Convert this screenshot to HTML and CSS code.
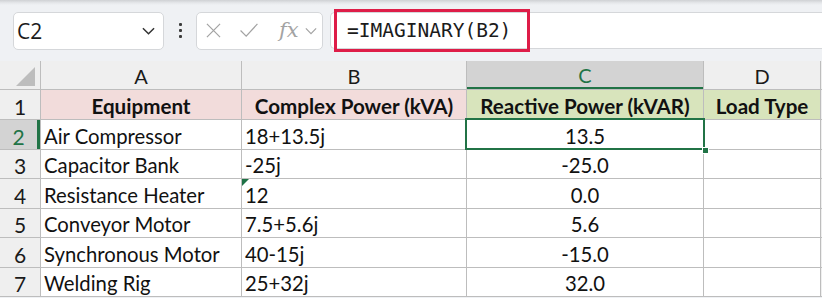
FILE: index.html
```html
<!DOCTYPE html>
<html lang="en">

<head>
  <meta charset="UTF-8" />
  <meta name="viewport" content="width=device-width, initial-scale=1.0" />
  <title>IMAGINARY</title>
  <link rel="stylesheet" href="styles.css">
</head>

<body>
  <div class="toolbar">
    <div class="name-box">
      <span class="name-text">C2</span>
      <svg class="chevron" viewBox="0 0 14 8" fill="none" stroke="currentColor">
        <path stroke-width="1.6" d="M1 1l6 6 6-6"></path>
      </svg>
    </div>
    <div class="grip"><i></i><i></i><i></i></div>
    <div class="fx-box">
      <svg class="fx-icon" viewBox="0 0 16 16" fill="none" stroke="currentColor">
        <path stroke-width="1.3" d="M1 1l14 14M15 1L1 15"></path>
      </svg>
      <svg class="fx-icon fx-check" viewBox="0 0 20 16" fill="none" stroke="currentColor">
        <path stroke-width="1.3" d="M1 8l6 6L19 1"></path>
      </svg>
      <span class="fx-label">fx</span>
      <svg class="chevron small" viewBox="0 0 14 8" fill="none" stroke="currentColor">
        <path stroke-width="1.4" d="M1 1l6 6 6-6"></path>
      </svg>
    </div>
    <div class="formula-bar">
      <span class="formula">=IMAGINARY(B2)</span>
    </div>
    <div class="highlight"></div>
  </div>

  <div class="sheet">
    <div class="grid">
      <div class="corner"><span class="corner-mark"></span></div>
      <div class="col-hdr">A</div>
      <div class="col-hdr">B</div>
      <div class="col-hdr active">C</div>
      <div class="col-hdr">D</div>
      <div class="pad"></div>

      <div class="row-hdr">1</div>
      <div class="cell head pink">Equipment</div>
      <div class="cell head pink">Complex Power (kVA)</div>
      <div class="cell head green">Reactive Power (kVAR)</div>
      <div class="cell head green">Load Type</div>
      <div class="pad"></div>

      <div class="row-hdr active">2</div>
      <div class="cell">Air Compressor</div>
      <div class="cell">18+13.5j</div>
      <div class="cell num">13.5</div>
      <div class="cell"></div>
      <div class="pad"></div>

      <div class="row-hdr">3</div>
      <div class="cell">Capacitor Bank</div>
      <div class="cell">-25j</div>
      <div class="cell num">-25.0</div>
      <div class="cell"></div>
      <div class="pad"></div>

      <div class="row-hdr">4</div>
      <div class="cell">Resistance Heater</div>
      <div class="cell flagged">12</div>
      <div class="cell num">0.0</div>
      <div class="cell"></div>
      <div class="pad"></div>

      <div class="row-hdr">5</div>
      <div class="cell">Conveyor Motor</div>
      <div class="cell">7.5+5.6j</div>
      <div class="cell num">5.6</div>
      <div class="cell"></div>
      <div class="pad"></div>

      <div class="row-hdr">6</div>
      <div class="cell">Synchronous Motor</div>
      <div class="cell">40-15j</div>
      <div class="cell num">-15.0</div>
      <div class="cell"></div>
      <div class="pad"></div>

      <div class="row-hdr">7</div>
      <div class="cell">Welding Rig</div>
      <div class="cell">25+32j</div>
      <div class="cell num">32.0</div>
      <div class="cell"></div>
      <div class="pad"></div>
    </div>
    <div class="selection"><span class="handle"></span></div>
  </div>
</body>

</html>
```

FILE: styles.css
```css
:root {
  --toolbar-bg: #eff1f4;
  --box-border: #d5d7da;
  --icon: #a3a3a3;
  --grid-line: #bdbdbd;
  --hdr-bg: #efefef;
  --hdr-active: #d3d3d3;
  --excel-green: #217346;
  --pink: #f2dcdb;
  --green: #d8e4bc;
  --red: #de1d48;
}

* {
  box-sizing: border-box;
  margin: 0;
  padding: 0;
}

body {
  width: 822px;
  height: 298px;
  overflow: hidden;
  background: var(--toolbar-bg);
  font-family: Lato, "Liberation Sans", sans-serif;
  color: #000;
}

/* barre de formule */
.toolbar {
  position: relative;
  height: 61px;
  display: flex;
  align-items: center;
  padding: 0 0 0 13px;
  background: linear-gradient(#cfd1d4 0, #e6e8eb 3px, var(--toolbar-bg) 5px);
}

.name-box {
  display: flex;
  align-items: center;
  justify-content: space-between;
  width: 151px;
  height: 38px;
  padding: 0 8px 0 3px;
  background: #fff;
  border: 1px solid var(--box-border);
  border-radius: 5px;
}

.name-text {
  font-family: "Open Sans", sans-serif;
  font-size: 21px;
  color: #1b1b1b;
}

.chevron {
  width: 13px;
  height: 8px;
  color: #333;
}

.chevron.small {
  width: 12px;
  color: var(--icon);
}

.grip {
  display: flex;
  flex-direction: column;
  gap: 3px;
  width: 32px;
  align-items: center;
}

.grip i {
  display: block;
  width: 3px;
  height: 3px;
  border-radius: 1px;
  background: #3c3c3c;
}

.fx-box {
  display: flex;
  align-items: center;
  width: 127px;
  height: 38px;
  padding: 0 5px 0 9px;
  background: #fff;
  border: 1px solid var(--box-border);
  border-radius: 5px;
  color: var(--icon);
}

.fx-icon {
  width: 15px;
  height: 15px;
  margin-right: 18px;
}

.fx-check {
  width: 20px;
  margin-right: 20px;
}

.fx-label {
  font-family: "DejaVu Serif", serif;
  font-style: italic;
  font-size: 21px;
  margin-right: 6px;
  line-height: 1;
}

.formula-bar {
  flex: 1;
  display: flex;
  align-items: center;
  height: 37px;
  margin-left: 7px;
  padding-left: 16px;
  background: #fff;
  border: 1px solid var(--box-border);
  border-right: none;
  border-radius: 5px 0 0 5px;
}

.formula {
  font-family: "DejaVu Sans Mono", monospace;
  font-size: 19.5px;
  color: #1b1b1b;
}

.highlight {
  position: absolute;
  left: 334px;
  top: 9px;
  width: 196px;
  height: 43px;
  border: 3px solid var(--red);
}

/* feuille */
.sheet {
  position: relative;
}

.grid {
  display: grid;
  grid-template-columns: 40px 200px 224px 236px 116px 1fr;
  grid-template-rows: 28px 29px 29px 28px 29px 28px 29px 28px;
  gap: 1px;
  background: var(--grid-line);
  padding-bottom: 1px;
}

.corner,
.col-hdr,
.row-hdr {
  background: var(--hdr-bg);
  display: flex;
  align-items: center;
  justify-content: center;
  font-family: Lato, sans-serif;
  font-size: 20px;
  color: #1a1a1a;
}

.corner {
  position: relative;
}

.corner-mark {
  position: absolute;
  right: 5px;
  bottom: 3px;
  width: 0;
  height: 0;
  border-left: 19px solid transparent;
  border-bottom: 19px solid #bdbdbd;
}

.col-hdr {
  padding-top: 2px;
}

.col-hdr.active {
  background: var(--hdr-active);
  color: var(--excel-green);
  border-bottom: 2px solid var(--excel-green);
}

.row-hdr {
  padding-top: 3px;
  font-size: 21px;
}

.row-hdr.active {
  background: var(--hdr-active);
  color: var(--excel-green);
  border-right: 3px solid var(--excel-green);
}

.pad {
  background: var(--hdr-bg);
}

.cell {
  position: relative;
  background: #fff;
  display: flex;
  align-items: flex-end;
  padding: 0 0 1px 3px;
  font-size: 20.3px;
  white-space: nowrap;
  overflow: visible;
  color: #111;
}

.cell.head {
  justify-content: center;
  font-weight: 700;
  font-size: 20.6px;
  padding-left: 0;
}

.cell.pink {
  background: var(--pink);
}

.cell.green {
  background: var(--green);
}

.cell.num {
  justify-content: center;
  padding-left: 0;
}

.flagged::before {
  content: "";
  position: absolute;
  left: 0;
  top: 0;
  border-top: 7px solid #1e7145;
  border-right: 7px solid transparent;
}

.selection {
  position: absolute;
  left: 465px;
  top: 57px;
  width: 240px;
  height: 32px;
  border: 2px solid var(--excel-green);
  pointer-events: none;
}

.handle {
  position: absolute;
  right: -6px;
  bottom: -6px;
  width: 7px;
  height: 7px;
  background: var(--excel-green);
  border: 1px solid #fff;
}
```
